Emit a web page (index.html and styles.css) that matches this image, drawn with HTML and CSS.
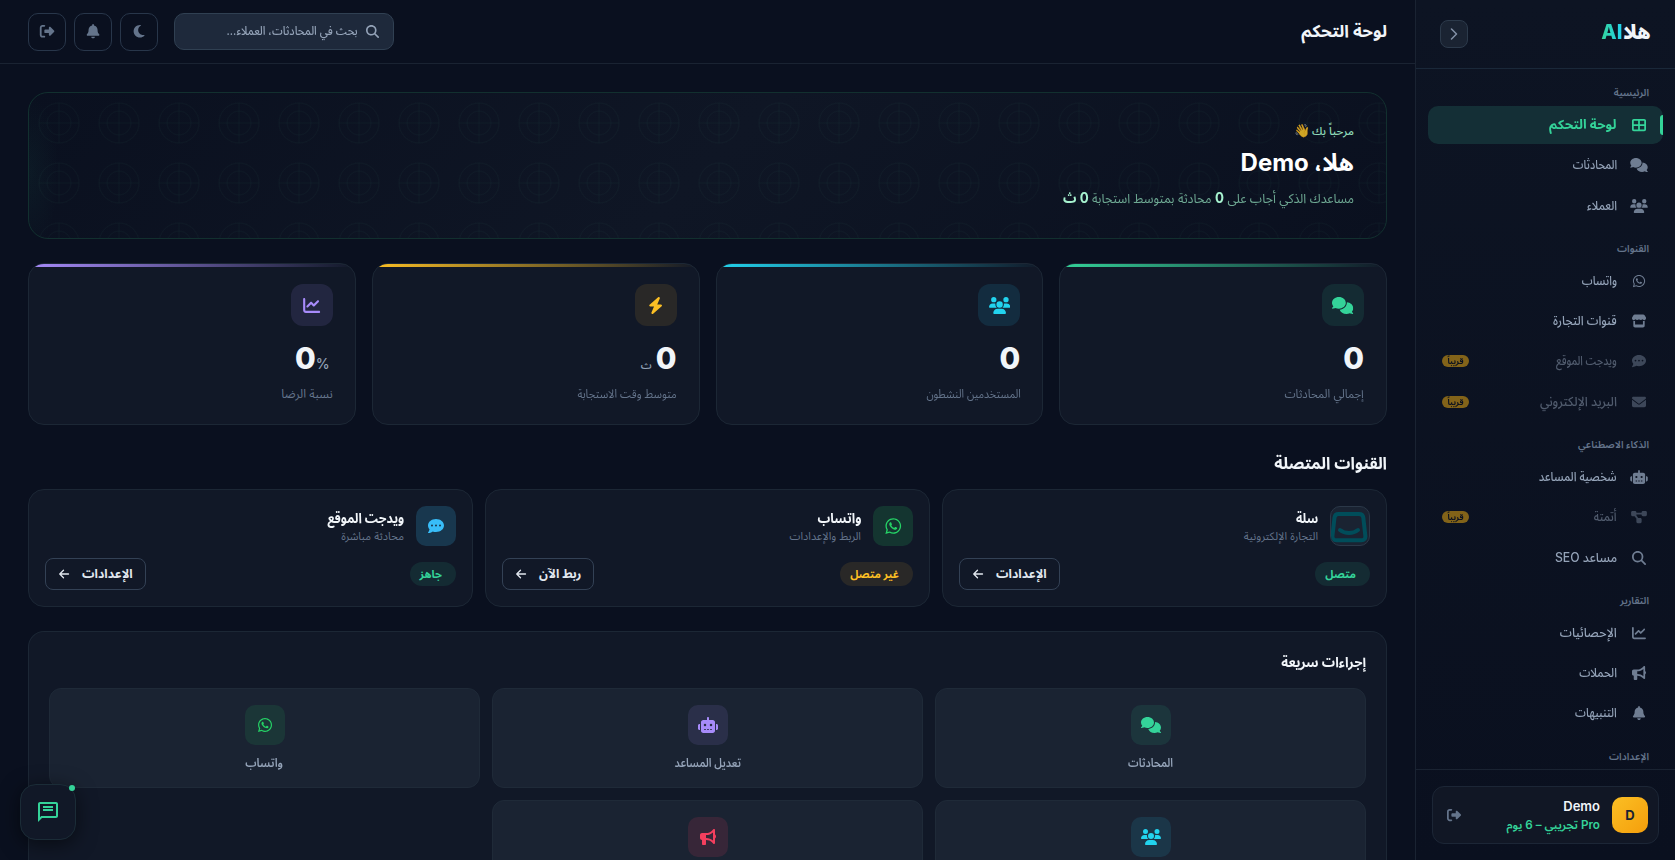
FILE: index.html
```html
<!DOCTYPE html>
<html lang="ar" dir="rtl">
<head>
<meta charset="utf-8">
<title>لوحة التحكم</title>
<link rel="stylesheet" href="styles.css">
</head>
<body>
<svg class="sprite" aria-hidden="true">
<symbol id="comments" viewBox="0 0 640 512"><path d="M208 352c114.900 0 208-78.800 208-176S322.900 0 208 0S0 78.800 0 176c0 38.600 14.700 74.300 39.600 103.400c-3.500 9.400-8.700 17.700-14.200 24.700c-4.800 6.200-9.700 11-13.300 14.300c-1.800 1.600-3.300 2.900-4.300 3.700l-1.300 1C1 327.200-1.400 334.400 .8 340.900S9.100 352 16 352c21.800 0 43.800-5.600 62.100-12.500c9.200-3.500 17.800-7.400 25.200-11.400C134.100 343.300 169.800 352 208 352zM448 176c0 112.300-99.100 196.900-216.500 207C255.800 457.400 336.400 512 432 512c38.200 0 73.900-8.700 104.700-23.900c7.500 4 16 7.900 25.200 11.400c18.300 6.900 40.300 12.500 62.100 12.500c6.900 0 13.100-4.500 15.200-11.100c2.100-6.600-.2-13.800-5.800-17.900l-1.300-1c-1-.8-2.500-2-4.300-3.700c-3.600-3.300-8.500-8.100-13.300-14.300c-5.500-7-10.700-15.400-14.200-24.700c24.900-29 39.600-64.700 39.600-103.400c0-92.800-84.900-168.900-192.600-175.500c.4 5.100 .6 10.300 .6 15.500z"/></symbol>
<symbol id="users" viewBox="0 0 640 512"><path d="M144 0a80 80 0 1 1 0 160A80 80 0 1 1 144 0zM512 0a80 80 0 1 1 0 160A80 80 0 1 1 512 0zM0 298.700C0 239.800 47.800 192 106.700 192h42.700c15.900 0 31 3.500 44.600 9.700c-1.300 7.200-1.900 14.700-1.900 22.300c0 38.200 16.800 72.500 43.300 96H21.300C9.600 320 0 310.400 0 298.700zM405.300 320c26-23.500 42.700-57.800 42.700-96c0-7.600-.7-15-1.900-22.300c13.600-6.300 28.700-9.700 44.600-9.700h42.700C592.200 192 640 239.800 640 298.700c0 11.800-9.600 21.300-21.300 21.300H405.300zM224 224a96 96 0 1 1 192 0 96 96 0 1 1 -192 0zM128 485.300C128 411.700 187.700 352 261.300 352H378.700C452.300 352 512 411.700 512 485.300c0 14.700-11.900 26.700-26.700 26.700H154.700c-14.700 0-26.700-11.900-26.700-26.700z"/></symbol>
<symbol id="bolt" viewBox="0 0 448 512"><path d="M349.400 44.600c5.900-13.700 1.500-29.700-10.600-38.500s-28.600-8-39.900 1.800l-256 224c-10 8.800-13.600 22.900-8.900 35.300S50.700 288 64 288H175.500L98.600 467.400c-5.900 13.700-1.500 29.700 10.600 38.500s28.600 8 39.900-1.800l256-224c10-8.800 13.600-22.900 8.900-35.300s-16.600-20.700-30-20.700H272.500L349.400 44.600z"/></symbol>
<symbol id="moon" viewBox="0 0 384 512"><path d="M223.500 32C100 32 0 132.300 0 256S100 480 223.500 480c60.600 0 115.500-24.200 155.800-63.400c5-4.900 6.300-12.500 3.100-18.700s-10.100-9.700-17-8.500c-9.800 1.700-19.800 2.600-30.100 2.600c-96.900 0-175.500-78.800-175.500-176c0-65.800 36-123.100 89.300-153.300c6.100-3.500 9.200-10.500 7.700-17.300s-7.300-11.900-14.300-12.500c-6.300-.5-12.600-.8-19-.8z"/></symbol>
<symbol id="bell" viewBox="0 0 448 512"><path d="M224 0c-17.700 0-32 14.300-32 32V51.200C119 66 64 130.600 64 208v18.800c0 47-17.300 92.400-48.500 127.600l-7.400 8.300c-8.400 9.400-10.400 22.900-5.300 34.400S19.400 416 32 416H416c12.600 0 24-7.400 29.200-18.900s3.100-25-5.300-34.400l-7.400-8.300C401.300 319.200 384 273.900 384 226.800V208c0-77.400-55-142-128-156.800V32c0-17.700-14.300-32-32-32zm45.300 493.300c12-12 18.700-28.300 18.700-45.300H160c0 17 6.700 33.300 18.700 45.300s28.300 18.700 45.300 18.700s33.300-6.700 45.300-18.700z"/></symbol>
<symbol id="logout" viewBox="0 0 512 512"><path d="M377.900 105.900L500.700 228.700c7.200 7.200 11.300 17.100 11.300 27.300s-4.100 20.100-11.300 27.300L377.900 406.100c-6.400 6.400-15 9.900-24 9.900c-18.700 0-33.900-15.200-33.900-33.900V320H192c-17.700 0-32-14.300-32-32v-64c0-17.700 14.300-32 32-32h128v-62.100c0-18.700 15.200-33.900 33.900-33.900c9 0 17.600 3.600 24 9.900zM160 96H96c-17.700 0-32 14.300-32 32v256c0 17.700 14.300 32 32 32h64c17.700 0 32 14.300 32 32s-14.300 32-32 32H96c-53 0-96-43-96-96V128C0 75 43 32 96 32h64c17.700 0 32 14.300 32 32s-14.300 32-32 32z"/></symbol>
<symbol id="search" viewBox="0 0 512 512"><path d="M416 208c0 45.900-14.900 88.300-40 122.700L502.600 457.400c12.500 12.500 12.500 32.800 0 45.300s-32.800 12.500-45.300 0L330.700 376c-34.400 25.200-76.800 40-122.700 40C93.100 416 0 322.900 0 208S93.100 0 208 0S416 93.100 416 208zM208 352a144 144 0 1 0 0-288 144 144 0 1 0 0 288z"/></symbol>
<symbol id="dots" viewBox="0 0 512 512"><path d="M256 448c141.400 0 256-93.100 256-208S397.400 32 256 32S0 125.100 0 240c0 45.100 17.700 86.800 47.700 120.900c-1.900 24.500-11.400 46.300-21.400 62.900c-5.500 9.200-11.100 16.600-15.200 21.600l-6.500 7.400c-4.600 4.600-5.900 11.400-3.400 17.400c2.500 6 8.300 9.900 14.800 9.900c28.700 0 57.600-8.900 81.600-19.300c22.900-10 42.400-21.900 54.300-30.600c31.800 11.500 67 17.900 104.100 17.900zM128 208a32 32 0 1 1 0 64 32 32 0 1 1 0-64zm128 0a32 32 0 1 1 0 64 32 32 0 1 1 0-64zm96 32a32 32 0 1 1 64 0 32 32 0 1 1 -64 0z"/></symbol>
<symbol id="mail" viewBox="0 0 512 512"><path d="M48 64C21.500 64 0 85.500 0 112c0 15.100 7.100 29.300 19.200 38.400L236.800 313.600c11.400 8.500 27 8.500 38.400 0L492.800 150.400c12.100-9.100 19.200-23.300 19.200-38.400c0-26.500-21.500-48-48-48H48zM0 176V384c0 35.300 28.700 64 64 64H448c35.300 0 64-28.700 64-64V176L294.400 339.200c-22.800 17.100-54 17.100-76.800 0L0 176z"/></symbol>
<symbol id="chart" viewBox="0 0 512 512"><path d="M64 64c0-17.700-14.300-32-32-32S0 46.300 0 64V400c0 44.200 35.800 80 80 80H480c17.700 0 32-14.300 32-32s-14.300-32-32-32H80c-8.800 0-16-7.200-16-16V64zm406.600 86.600c12.500-12.500 12.500-32.800 0-45.300s-32.800-12.500-45.300 0L320 210.700l-57.400-57.400c-12.500-12.500-32.800-12.500-45.300 0l-112 112c-12.500 12.500-12.500 32.800 0 45.300s32.800 12.500 45.300 0L240 221.300l57.400 57.400c12.500 12.500 32.800 12.500 45.300 0l128-128z"/></symbol>
<symbol id="grid" viewBox="0 0 512 512"><path d="M448 96V224H288V96H448zm0 192V416H288V288H448zM224 224H64V96H224V224zM64 288H224V416H64V288zM64 32C28.700 32 0 60.700 0 96V416c0 35.300 28.700 64 64 64H448c35.300 0 64-28.700 64-64V96c0-35.300-28.700-64-64-64H64z"/></symbol>
<symbol id="robot" viewBox="0 0 640 512"><path d="M320 0c17.700 0 32 14.300 32 32V96H472c39.800 0 72 32.200 72 72V440c0 39.800-32.200 72-72 72H168c-39.800 0-72-32.200-72-72V168c0-39.800 32.200-72 72-72H288V32c0-17.700 14.300-32 32-32zM208 384c-8.800 0-16 7.200-16 16s7.200 16 16 16h32c8.800 0 16-7.200 16-16s-7.200-16-16-16H208zm96 0c-8.800 0-16 7.200-16 16s7.200 16 16 16h32c8.800 0 16-7.200 16-16s-7.200-16-16-16H304zm96 0c-8.800 0-16 7.200-16 16s7.200 16 16 16h32c8.800 0 16-7.200 16-16s-7.200-16-16-16H400zM264 256a40 40 0 1 0 -80 0 40 40 0 1 0 80 0zm152 40a40 40 0 1 0 0-80 40 40 0 1 0 0 80zM48 224H64V416H48c-26.500 0-48-21.500-48-48V272c0-26.500 21.500-48 48-48zm544 0c26.500 0 48 21.500 48 48v96c0 26.500-21.500 48-48 48H576V224h16z"/></symbol>
<symbol id="horn" viewBox="0 0 512 512"><path d="M480 32c0-12.900-7.800-24.600-19.800-29.600s-25.700-2.200-34.900 6.900L381.700 53c-48 48-113.100 75-181 75H64c-35.300 0-64 28.700-64 64v96c0 35.300 28.700 64 64 64v128c0 17.700 14.300 32 32 32h64c17.700 0 32-14.300 32-32V352h8.700c67.900 0 133 27 181 75l43.600 43.600c9.200 9.200 22.900 11.900 34.900 6.900s19.800-16.600 19.800-29.600V300.400c18.600-8.800 32-32.500 32-60.400s-13.400-51.600-32-60.400V32zm-64 76.700V371.300C357.200 317.800 280.500 288 200.700 288H192V192h8.700c79.800 0 156.500-29.800 215.300-83.300z"/></symbol>
<symbol id="store" viewBox="0 0 512 512"><path d="M100 16h312c17 0 32 8 41 22l54 84c22 36-4 96-50 102-30 4-56-9-72-28-30 36-97 36-130 0-33 36-100 36-130 0-16 19-42 32-72 28-46-6-66-66-44-102l50-84c9-14 24-22 41-22zM48 254c22 5 44 2 64-6v136h288V248c20 8 42 11 64 6v178c0 35-29 64-64 64H112c-35 0-64-29-64-64V254z"/></symbol>
<symbol id="flow" viewBox="0 0 576 512"><path d="M0 80c0-26.500 21.500-48 48-48h96c26.500 0 48 21.500 48 48v16h192V80c0-26.500 21.500-48 48-48h96c26.500 0 48 21.500 48 48v96c0 26.500-21.500 48-48 48h-96c-26.500 0-48-21.500-48-48v-16H192v16c0 7-2 14-4 20l68 92h80c26.500 0 48 21.500 48 48v96c0 26.500-21.500 48-48 48h-96c-26.500 0-48-21.500-48-48v-96c0-7 2-14 4-20l-68-92H48c-26.500 0-48-21.500-48-48V80z"/></symbol>
<symbol id="whatsapp" viewBox="0 0 448 512"><path d="M380.900 97.100C339 55.100 283.200 32 223.900 32c-122.400 0-222 99.600-222 222 0 39.100 10.200 77.300 29.600 111L0 480l117.700-30.900c32.400 17.700 68.900 27 106.100 27h.1c122.300 0 224.100-99.600 224.100-222 0-59.300-25.200-115-67.100-157zm-157 341.600c-33.200 0-65.700-8.900-94-25.700l-6.700-4-69.800 18.300L72 359.200l-4.400-7c-18.500-29.400-28.200-63.300-28.200-98.200 0-101.700 82.800-184.500 184.600-184.500 49.300 0 95.600 19.200 130.400 54.100 34.800 34.900 56.200 81.200 56.100 130.500 0 101.800-84.900 184.600-186.600 184.600zm101.200-138.200c-5.500-2.800-32.800-16.200-37.900-18-5.100-1.900-8.800-2.800-12.500 2.800-3.700 5.600-14.300 18-17.600 21.800-3.200 3.700-6.500 4.200-12 1.400-32.600-16.300-54-29.100-75.500-66-5.700-9.800 5.700-9.100 16.300-30.300 1.800-3.700.9-6.900-.5-9.700-1.400-2.800-12.500-30.100-17.100-41.200-4.500-10.800-9.100-9.300-12.500-9.500-3.200-.2-6.900-.2-10.600-.2-3.700 0-9.700 1.400-14.800 6.900-5.100 5.600-19.400 19-19.400 46.300 0 27.300 19.900 53.700 22.600 57.400 2.800 3.700 39.100 59.700 94.800 83.800 35.200 15.200 49 16.500 66.600 13.900 10.700-1.600 32.800-13.400 37.400-26.400 4.600-13 4.600-24.100 3.200-26.400-1.300-2.500-5-3.900-10.500-6.600z"/></symbol>
<symbol id="arrow" viewBox="0 0 24 24"><path d="M21 12H4M11 4.500 3.500 12l7.500 7.500" fill="none" stroke="currentColor" stroke-width="2.600" stroke-linecap="round" stroke-linejoin="round"/></symbol>
</svg>

<div class="app">
  <aside class="sidebar">
    <div class="brand">
      <div class="logo"><span>هلا</span><span class="logo-ai">AI</span></div>
      <button class="toggle"><svg viewBox="0 0 12 12"><path d="M3.500 1l5 5-5 5"/></svg></button>
    </div>
    <nav class="nav">
      <div class="nav-title">الرئيسية</div>
      <a class="item active"><svg class="ic"><use href="#grid"/></svg><span class="w103">لوحة التحكم</span></a>
      <a class="item"><svg class="ic"><use href="#comments"/></svg><span class="w82">المحادثات</span></a>
      <a class="item"><svg class="ic"><use href="#users"/></svg><span class="w86">العملاء</span></a>
      <div class="nav-title">القنوات</div>
      <a class="item"><svg class="ic wa-nav"><use href="#whatsapp"/></svg><span class="w84">واتساب</span></a>
      <a class="item"><svg class="ic"><use href="#store"/></svg><span class="w90">قنوات التجارة</span></a>
      <a class="item soon"><svg class="ic"><use href="#dots"/></svg><span class="w79">ويدجت الموقع</span><em>قريباً</em></a>
      <a class="item soon"><svg class="ic"><use href="#mail"/></svg><span class="w94">البريد الإلكتروني</span><em>قريباً</em></a>
      <div class="nav-title">الذكاء الاصطناعي</div>
      <a class="item"><svg class="ic"><use href="#robot"/></svg><span class="w86">شخصية المساعد</span></a>
      <a class="item soon"><svg class="ic"><use href="#flow"/></svg><span class="w86">أتمتة</span><em>قريباً</em></a>
      <a class="item"><svg class="ic"><use href="#search"/></svg><span class="w94">مساعد SEO</span></a>
      <div class="nav-title">التقارير</div>
      <a class="item"><svg class="ic"><use href="#chart"/></svg><span class="w94">الإحصائيات</span></a>
      <a class="item"><svg class="ic"><use href="#horn"/></svg><span class="w86">الحملات</span></a>
      <a class="item"><svg class="ic"><use href="#bell"/></svg><span class="w84">التنبيهات</span></a>
      <div class="nav-title">الإعدادات</div>
    </nav>
    <div class="side-foot">
      <div class="user">
        <div class="avatar">D</div>
        <div class="user-text"><div class="user-name">Demo</div><div class="user-plan">Pro تجريبي – 6 يوم</div></div>
        <svg class="ic user-out"><use href="#logout"/></svg>
      </div>
    </div>
  </aside>

  <main class="main">
    <header class="topbar">
      <h1>لوحة التحكم</h1>
      <div class="tools">
        <div class="search"><svg class="ic"><use href="#search"/></svg><span class="w90">بحث في المحادثات، العملاء...</span></div>
        <button class="tool"><svg class="ic"><use href="#moon"/></svg></button>
        <button class="tool"><svg class="ic"><use href="#bell"/></svg></button>
        <button class="tool"><svg class="ic"><use href="#logout"/></svg></button>
      </div>
    </header>
    <div class="content">
      <section class="hero">
        <div class="hero-hi">مرحباً بك <span class="wave">👋</span></div>
        <h2>هلا، Demo</h2>
        <p class="w95">مساعدك الذكي أجاب على <b>0</b> محادثة بمتوسط استجابة <b>0 ث</b></p>
      </section>

      <section class="stats">
        <div class="stat green"><div class="badge-ic"><svg class="ic"><use href="#comments"/></svg></div><div class="value">0</div><div class="label w94">إجمالي المحادثات</div></div>
        <div class="stat cyan"><div class="badge-ic"><svg class="ic"><use href="#users"/></svg></div><div class="value">0</div><div class="label w88">المستخدمين النشطون</div></div>
        <div class="stat amber"><div class="badge-ic"><svg class="ic"><use href="#bolt"/></svg></div><div class="value">0<small class="unit">ث</small></div><div class="label w90">متوسط وقت الاستجابة</div></div>
        <div class="stat violet"><div class="badge-ic"><svg class="ic"><use href="#chart"/></svg></div><div class="value pct">0<small>%</small></div><div class="label">نسبة الرضا</div></div>
      </section>

      <h3 class="section-title w94">القنوات المتصلة</h3>
      <section class="channels">
        <div class="channel">
          <div class="ch-head"><div class="ch-ic salla"><svg viewBox="0 0 40 40"><path d="M9.500 7h20.500c2.500 0 4 1.300 4.300 3.500l2 18c.4 3-1 4.800-4 4.800H7.500c-3 0-4.400-1.800-4-4.800l2-18C5.800 8.300 7 7 9.500 7z"/><path d="M11 23c5 4 13 4 18 0"/></svg></div><div><div class="ch-name w86">سلة</div><div class="ch-sub">التجارة الإلكترونية</div></div></div>
          <div class="ch-foot"><span class="pill">متصل</span><button class="btn">الإعدادات<svg class="ic"><use href="#arrow"/></svg></button></div>
        </div>
        <div class="channel">
          <div class="ch-head"><div class="ch-ic wa"><svg class="ic"><use href="#whatsapp"/></svg></div><div><div class="ch-name w90">واتساب</div><div class="ch-sub">الربط والإعدادات</div></div></div>
          <div class="ch-foot"><span class="pill warn">غير متصل</span><button class="btn">ربط الآن<svg class="ic"><use href="#arrow"/></svg></button></div>
        </div>
        <div class="channel">
          <div class="ch-head"><div class="ch-ic web"><svg class="ic"><use href="#dots"/></svg></div><div><div class="ch-name w88">ويدجت الموقع</div><div class="ch-sub">محادثة مباشرة</div></div></div>
          <div class="ch-foot"><span class="pill">جاهز</span><button class="btn">الإعدادات<svg class="ic"><use href="#arrow"/></svg></button></div>
        </div>
      </section>

      <section class="quick">
        <h4 class="w94">إجراءات سريعة</h4>
        <div class="quick-grid">
          <a class="q"><div class="q-ic green"><svg class="ic"><use href="#comments"/></svg></div><span class="w88">المحادثات</span></a>
          <a class="q"><div class="q-ic violet"><svg class="ic"><use href="#robot"/></svg></div><span class="w88">تعديل المساعد</span></a>
          <a class="q"><div class="q-ic wa"><svg class="ic"><use href="#whatsapp"/></svg></div><span class="w94">واتساب</span></a>
          <a class="q"><div class="q-ic cyan"><svg class="ic"><use href="#users"/></svg></div></a>
          <a class="q"><div class="q-ic rose"><svg class="ic"><use href="#horn"/></svg></div></a>
        </div>
      </section>
    </div>
  </main>
</div>
<button class="chat"><svg viewBox="0 0 24 24"><path d="M20 2H4c-1.100 0-2 .9-2 2v18l4-4h14c1.100 0 2-.9 2-2V4c0-1.100-.9-2-2-2zm0 14H5.200L4 17.200V4h16v12z"/><path d="M7 6h10v2H7zM7 9h10v2H7z"/></svg><i></i></button>
</body>
</html>
```
FILE: styles.css
```css
* { box-sizing: border-box; margin: 0; padding: 0; }
html, body { height: 860px; overflow: hidden; }
body {
  background: #0a101f;
  color: #f1f5f9;
  font-family: Inter, "Noto Sans Arabic", "DejaVu Sans", sans-serif;
  font-size: 13px;
}
button { font: inherit; color: inherit; background: none; border: 0; }
.sprite { position: absolute; width: 0; height: 0; }
.ic { display: block; fill: currentColor; width: 1.25em; height: 1em; flex: none; }
.app { display: flex; height: 860px; }

/* Condensed text widths */
.w79, .w82, .w84, .w86, .w88, .w90, .w94, .w95, .w103 { transform-origin: 100% 50%; }
.w79 { transform: scaleX(.79); }
.w82 { transform: scaleX(.82); }
.w84 { transform: scaleX(.84); }
.w86 { transform: scaleX(.86); }
.w88 { transform: scaleX(.88); }
.w90 { transform: scaleX(.9); }
.w94 { transform: scaleX(.94); }
.w95 { transform: scaleX(.95); }
.w103 { transform: scaleX(1.03); }

/* Sidebar */
.sidebar { width: 260px; flex: none; display: flex; flex-direction: column; background: linear-gradient(#0d1423, #0a101f); border-left: 1px solid #1a2332; }
.brand { height: 69px; flex: none; display: flex; align-items: center; justify-content: space-between; padding: 0 24px; border-bottom: 1px solid #1a2839; }
.logo { display: flex; gap: 1px; margin-bottom: 4px; font-weight: 900; font-size: 20px; line-height: 28px; }
.logo-ai { font-weight: 800; background: linear-gradient(90deg, #34d399, #22d3ee); -webkit-background-clip: text; background-clip: text; color: transparent; }
.toggle { width: 28px; height: 28px; border: 1px solid #2c3a4b; border-radius: 8px; background: #1a2332; display: grid; place-items: center; }
.toggle svg { width: 12px; height: 12px; fill: none; stroke: #8391a7; stroke-width: 1.500; stroke-linecap: round; stroke-linejoin: round; }
.nav { flex: 1; min-height: 0; overflow: hidden; padding: 10px 12px 0; }
.nav-title { height: 26.800px; line-height: 26.800px; padding-right: 14px; font-size: 10px; font-weight: 600; color: #64748b; }
.item + .nav-title { margin-top: 10.200px; }
.item { position: relative; display: flex; align-items: center; height: 38.300px; margin-bottom: 2px; padding: 0 14px; border-radius: 10px; color: #94a3b8; font-size: 13px; font-weight: 500; }
.item .ic { width: 20px; height: 14px; margin-left: 12px; color: #6f7d92; }
.item.active { background: #142f36; color: #34d399; font-weight: 700; }
.item.active .ic { color: #34d399; }
.item.active::before { content: ""; position: absolute; right: 0; top: 9px; width: 3px; height: 20px; background: #34d399; border-radius: 3px 0 0 3px; }
.item.soon { opacity: .5; }
.item em { margin-right: auto; font-style: normal; font-size: 8px; font-weight: 700; line-height: 12px; height: 12px; width: 27px; text-align: center; border-radius: 8px; background: #f9b412; color: #0a101f; }
.side-foot { height: 91px; flex: none; border-top: 1px solid #1a2332; padding: 16px 16px 0; }
.user { height: 58px; border: 1px solid #1c2636; border-radius: 12px; background: #111725; display: flex; align-items: center; padding: 0 10px 0 14px; }
.avatar { width: 36px; height: 36px; border-radius: 10px; background: linear-gradient(135deg, #fbbf24, #f59e0b); color: #1a2332; font-weight: 700; display: grid; place-items: center; }
.user-text { margin-right: 12px; flex: 1; text-align: right; }
.user-name { font-size: 13px; font-weight: 600; line-height: 19px; }
.user-plan { font-size: 11.700px; font-weight: 600; line-height: 18px; color: #34d399; white-space: nowrap; }
.user-out { width: 14px; height: 14px; color: #64748b; }

/* Top bar */
.main { flex: 1; min-width: 0; display: flex; flex-direction: column; overflow: hidden; }
.topbar { height: 64px; flex: none; display: flex; align-items: center; justify-content: space-between; padding: 0 28px; border-bottom: 1px solid #1a2332; }
.topbar h1 { font-size: 17px; font-weight: 700; line-height: 24px; padding-bottom: 2px; }
.tools { display: flex; gap: 8px; }
.tool { width: 38px; height: 38px; border: 1px solid #28364a; border-radius: 10px; display: grid; place-items: center; color: #64748b; font-size: 14.500px; }
.search { width: 220px; height: 37px; margin-left: 8px; border: 1px solid #304052; border-radius: 10px; background: #1e293b; display: flex; align-items: center; padding-right: 14px; color: #94a3b8; font-size: 12px; font-weight: 500; white-space: nowrap; }
.search .ic { width: 13px; height: 13px; margin-left: 8px; }

/* Hero */
.content { flex: 1; min-height: 0; padding: 28px 28px 0; display: flex; flex-direction: column; }
.hero {
  height: 147px; flex: none; border: 1px solid #12302f; border-radius: 20px; padding: 25px 32px 0;
  background:
    url("data:image/svg+xml,%3Csvg xmlns='http://www.w3.org/2000/svg' width='60' height='60' fill='none' stroke='%2334d399' stroke-opacity='.032'%3E%3Ccircle cx='30' cy='30' r='20'/%3E%3Ccircle cx='30' cy='30' r='12'/%3E%3Cpath d='M30 10v40M10 30h40'/%3E%3C/svg%3E"),
    radial-gradient(ellipse 30px 80px at 0 55%, #34d3990c, transparent),
    linear-gradient(135deg, #0a101f, #0f1625 50%, #0a101f);
}
.hero-hi { font-size: 11.500px; font-weight: 500; line-height: 24px; color: #8fdab9; }
.wave { opacity: .8; font-size: 13px; margin-right: -1px; }
.hero h2 { font-size: 24px; font-weight: 700; line-height: 40px; color: #fff; }
.hero p { font-size: 13px; line-height: 30px; color: #6ea993; }
.hero b { color: #a7f3d0; font-size: 14px; font-weight: 700; }

/* Stats */
.stats { display: grid; grid-template-columns: repeat(4, 1fr); gap: 16px; margin-top: 24px; flex: none; }
.stat { position: relative; overflow: hidden; height: 162px; padding: 20px 22px 0; border: 1px solid #1c2735; border-radius: 16px; background: #111827; }
.stat::before { content: ""; position: absolute; inset: 0 0 auto 0; height: 3px; background: linear-gradient(90deg, var(--c), transparent); }
.badge-ic { width: 42px; height: 42px; border-radius: 12px; display: grid; place-items: center; font-size: 17px; color: var(--c); background: var(--bg); }
.green { --c: #34d399; --bg: #34d3991a; }
.cyan { --c: #22d3ee; --bg: #22a8d324; }
.amber { --c: #fbbf24; --bg: #fbbf241a; }
.violet { --c: #a78bfa; --bg: #a78bfa1f; }
.rose { --c: #f43f5e; --bg: #f43f5e22; }
.wa { --c: #25d366; --bg: #25d36628; }
.value { margin-top: 12px; height: 40px; line-height: 40px; font-size: 30px; font-weight: 800; }
.value small { font-size: 14px; font-weight: 500; color: #94a3b8; }
.value .unit { font-size: 11px; margin-right: 4px; }
.pct { direction: ltr; text-align: right; padding-right: 4px; }
.pct small { letter-spacing: -1px; }
.label { margin-top: 4px; line-height: 24px; font-size: 12px; color: #64748b; }

/* Channels */
.section-title { margin-top: 24px; height: 40px; flex: none; line-height: 28px; font-size: 17px; font-weight: 700; }
.channels { display: grid; grid-template-columns: repeat(3, 1fr); gap: 12px; flex: none; }
.channel { height: 118px; padding: 16px; border: 1px solid #1c2735; border-radius: 16px; background: #111827; }
.ch-head { display: flex; gap: 12px; height: 40px; }
.ch-ic { width: 40px; height: 40px; border-radius: 10px; display: grid; place-items: center; font-size: 16px; color: var(--c); background: var(--bg); }
.ch-ic.wa { font-size: 18px; }
.web { --c: #38bdf8; --bg: #38bdf830; }
.salla { background: #1a2332; border: 1px solid #2b3848; overflow: hidden; }
.salla svg { width: 40px; height: 40px; fill: none; stroke: #004d5a; stroke-width: 4; stroke-linecap: round; }
.ch-name { font-size: 14px; font-weight: 700; line-height: 24px; }
.ch-sub { font-size: 11px; line-height: 12px; color: #64748b; }
.ch-foot { display: flex; justify-content: space-between; align-items: center; margin-top: 12px; }
.pill { height: 24px; line-height: 24px; padding: 0 14px 0 10px; border-radius: 12px; font-size: 11px; font-weight: 700; color: #34d399; background: #34d3991a; }
.pill.warn { color: #fbbf24; background: #fbbf241a; }
.btn { height: 32px; display: flex; align-items: center; gap: 12px; padding: 0 12px; border: 1px solid #334155; border-radius: 8px; font-size: 12.300px; font-weight: 700; color: #e2e8f0; }
.btn .ic { width: 12px; height: 12px; }

/* Quick actions */
.quick { flex: 1; min-height: 0; overflow: hidden; margin-top: 24px; border: 1px solid #1c2735; border-bottom: 0; border-radius: 16px 16px 0 0; background: #111827; padding: 20px 20px 0; }
.quick h4 { height: 36px; line-height: 20px; font-size: 14px; font-weight: 700; }
.quick-grid { display: grid; grid-template-columns: repeat(3, 1fr); gap: 12px; }
.q { height: 100px; border: 1px solid #1f2a38; border-radius: 12px; background: #1a2332; display: flex; flex-direction: column; align-items: center; padding-top: 16px; color: #94a3b8; font-size: 12px; font-weight: 600; }
.q-ic { width: 40px; height: 40px; border-radius: 10px; display: grid; place-items: center; font-size: 16px; color: var(--c); background: var(--bg); }
.q-ic.wa { --bg: #25d3661c; }
.q span { margin-top: 8px; line-height: 20px; transform-origin: 50% 50%; }

/* Floating chat launcher */
.chat { position: fixed; left: 20px; top: 784px; width: 56px; height: 56px; border: 1px solid #1b2c37; border-radius: 16px; background: #111827; display: grid; place-items: center; box-shadow: 0 4px 20px #0008; }
.chat svg { width: 24px; height: 24px; fill: #34d399; }
.chat i { position: absolute; right: 0; top: 0; width: 6px; height: 6px; border-radius: 50%; background: #34d399; }
```
